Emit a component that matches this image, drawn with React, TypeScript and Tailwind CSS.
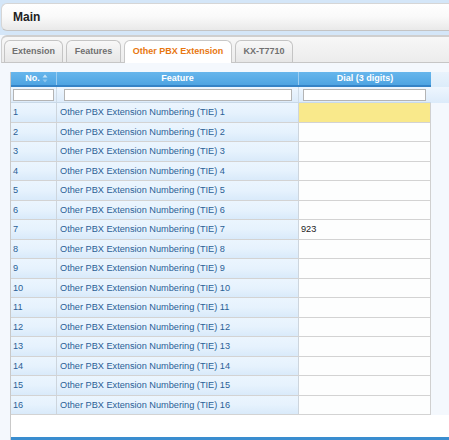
import React from "react";

const tabs = [
  { label: "Extension", w: "w-[59px]", active: false },
  { label: "Features", w: "w-[55px]", active: false },
  { label: "Other PBX Extension", w: "w-[108px]", active: true },
  { label: "KX-T7710", w: "w-[58px]", active: false },
];

const rows = Array.from({ length: 16 }, (_, i) => ({
  no: i + 1,
  feature: `Other PBX Extension Numbering (TIE) ${i + 1}`,
  dial: i === 6 ? "923" : "",
}));

function SortIcon() {
  return (
    <svg width="6" height="9" viewBox="0 0 6 9" className="ml-[2px]">
      <path d="M3 0.5 L5.5 3.5 L0.5 3.5 Z" fill="#c6e3f8" />
      <path d="M3 8.5 L5.5 5.5 L0.5 5.5 Z" fill="#8ec6ee" />
    </svg>
  );
}

export default function App() {
  return (
    <div
      className="w-[449px] h-[440px] overflow-hidden bg-[#f4f8fd] flex flex-col"
      style={{ fontFamily: '"Liberation Sans", Arial, sans-serif' }}
    >
      {/* Title panel */}
      <div className="bg-[#d4e6f8] pt-[3px] pb-[4px] pl-[1px]">
        <div className="h-[28px] rounded-tl-[6px] rounded-bl-[6px] border border-r-0 border-[#d6d6d6] border-b-[#c4c4c4] bg-gradient-to-b from-white via-[#f9f9f9] to-[#e9e9e9] flex items-center pl-[11px]">
          <span className="text-[12px] font-bold text-[#222]">Main</span>
        </div>
      </div>

      {/* Tabs */}
      <div className="ml-[1px] h-[28px] rounded-tl-[6px] border-t-2 border-l border-[#cfcfcf] border-b border-b-[#c6c6c6] bg-gradient-to-b from-[#f7f7f7] to-[#ececec] flex items-end gap-[3px] pl-[2px]">
        {tabs.map((t) => (
          <div
            key={t.label}
            className={
              t.active
                ? `${t.w} h-[23px] -mb-px rounded-t-[6px] border border-b-0 border-[#c8c8c8] bg-white flex items-center justify-center text-[9px] font-bold text-[#e8770f]`
                : `${t.w} h-[22px] rounded-t-[6px] border border-b-0 border-[#c4c4c4] bg-gradient-to-b from-[#f8f8f8] to-[#e6e6e6] flex items-center justify-center text-[9px] font-bold text-[#707070]`
            }
          >
            {t.label}
          </div>
        ))}
      </div>

      {/* Grid */}
      <div className="flex-1 pt-[9px] pl-[10px] flex flex-col">
        <div className="flex-1 flex flex-col border-l border-[#c9c9c9]">
          {/* Header */}
          <div className="flex h-[15px] bg-gradient-to-b from-[#e9f3fc] to-[#dcecfa]">
            <div className="flex w-[420px] h-[15px] bg-gradient-to-b from-[#67b6ec] to-[#4ea4e2] border-b-2 border-[#3583c6] text-white text-[9px] font-bold">
              <div className="w-[46px] flex items-center justify-center border-r border-[#9ccdf1] pl-[6px]">
                No.<SortIcon />
              </div>
              <div className="w-[242px] flex items-center justify-center border-r border-[#9ccdf1]">
                Feature
              </div>
              <div className="flex-1 flex items-center justify-center">Dial (3 digits)</div>
            </div>
          </div>

          {/* Filter row */}
          <div className="flex h-[16px] bg-gradient-to-b from-[#eef6fe] to-[#dcebfa]">
            <div className="flex w-[420px] border-b border-[#c9d9e8]">
              <div className="w-[46px] flex items-center pl-[2px] border-r border-[#cfdbe6]">
                <div className="w-[41px] h-[12px] bg-white border border-[#b4b4b4]" />
              </div>
              <div className="w-[242px] flex items-center pl-[7px] border-r border-[#cfdbe6]">
                <div className="w-[228px] h-[12px] bg-white border border-[#b4b4b4]" />
              </div>
              <div className="flex-1 flex items-center pl-[4px]">
                <div className="w-[123px] h-[12px] bg-white border border-[#b4b4b4]" />
              </div>
            </div>
          </div>

          {/* Rows */}
          <div className="w-[420px] border-r border-[#d0d0d0]">
            {rows.map((r) => (
              <div key={r.no} className="flex h-[19.5px] border-b border-[#d3d3d3] text-[9.2px]">
                <div className="w-[46px] pl-[2px] pt-[3px] text-[#2b5f96] border-r border-[#cdd5dd] bg-gradient-to-b from-[#ebf5fe] via-[#e6f2fd] to-[#d9eafa]">
                  {r.no}
                </div>
                <div className="w-[242px] pl-[3px] pt-[3px] text-[#2b5f96] border-r border-[#cdd5dd] bg-gradient-to-b from-[#ebf5fe] via-[#e6f2fd] to-[#d9eafa]">
                  {r.feature}
                </div>
                <div
                  className={
                    r.no === 1
                      ? "flex-1 pl-[2px] pt-[3px] bg-[#f9e98b]"
                      : "flex-1 pl-[2px] pt-[3px] text-[#222] bg-[#fdfefe]"
                  }
                >
                  {r.dial}
                </div>
              </div>
            ))}
          </div>

          {/* Empty area and pager bar */}
          <div className="flex-1 bg-white min-h-[22px]" />
          <div className="h-[3px] bg-[#3a8dcf]" />
        </div>
      </div>
    </div>
  );
}
